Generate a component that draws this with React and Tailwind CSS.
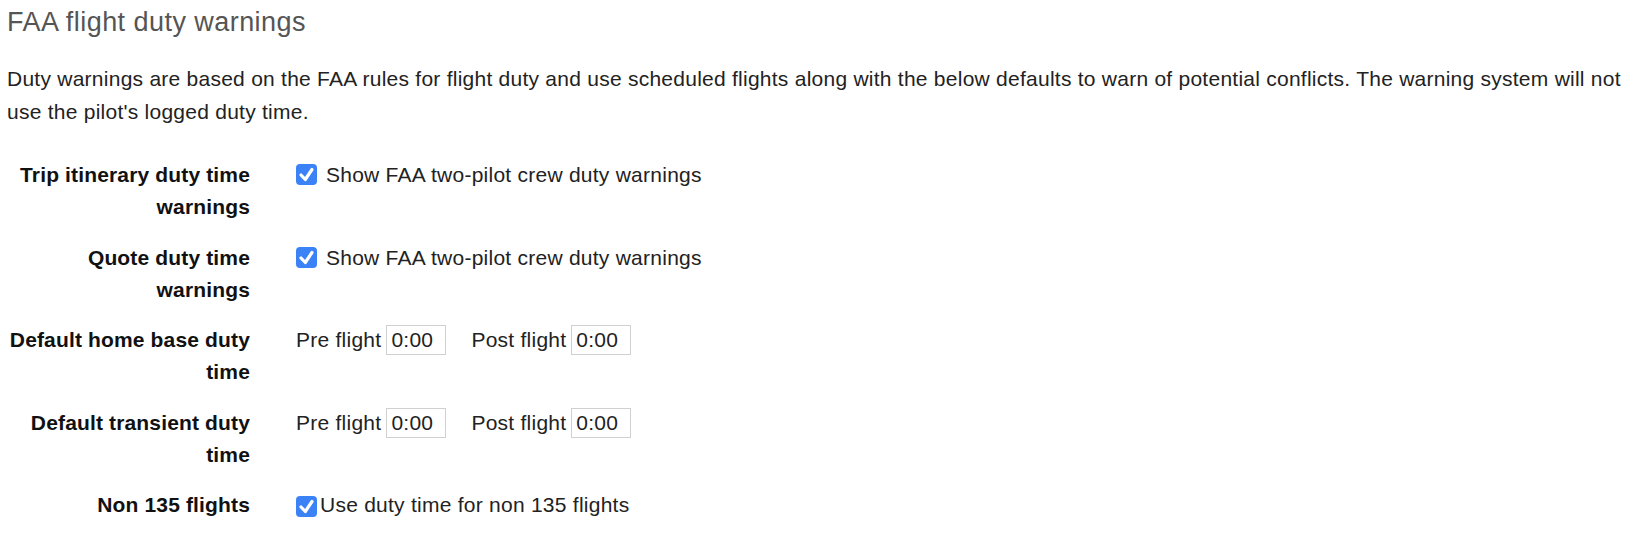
const Check = ({ drop = 3 }) => (
  <span
    className="inline-flex h-[21px] w-[21px] items-center justify-center rounded-[4px] bg-[#3b82f6]"
    style={{ verticalAlign: `-${drop}px` }}
  >
    <svg width="21" height="21" viewBox="0 0 21 21">
      <polyline
        points="5,11 9.3,15.5 16,5.5"
        fill="none"
        stroke="white"
        strokeWidth="3.2"
        strokeLinecap="round"
        strokeLinejoin="round"
      />
    </svg>
  </span>
);

const TimeInput = () => (
  <input
    type="text"
    defaultValue="0:00"
    className="inline-block h-[30px] w-[60px] border border-[#d0d0d0] bg-white px-[4px] text-[21px] tracking-[0.25px] text-[#222] outline-none"
  />
);

const Row = ({ label, children }) => (
  <div className="mb-[18.5px] flex">
    <div className="w-[243px] shrink-0 text-right font-bold tracking-[0.15px] text-[#111]">
      {label}
    </div>
    <div className="ml-[46px] tracking-[0.25px]">{children}</div>
  </div>
);

const PrePost = () => (
  <div className="flex items-baseline">
    <span>Pre flight</span>
    <span className="ml-[5px]">
      <TimeInput />
    </span>
    <span className="ml-[25px]">Post flight</span>
    <span className="ml-[5px]">
      <TimeInput />
    </span>
  </div>
);

export default function App() {
  return (
    <div className="h-[552px] w-[1640px] bg-white px-[7px] pt-[7px] font-['Liberation_Sans',Arial,sans-serif] text-[#222]">
      <h3 className="text-[27px] font-normal leading-[30px] tracking-[0.45px] text-[#555]">
        FAA flight duty warnings
      </h3>
      <p className="mt-[25px] text-[21px] leading-[33px] tracking-[0.25px]">
        Duty warnings are based on the FAA rules for flight duty and use
        scheduled flights along with the below defaults to warn of potential
        conflicts. The warning system will not use the pilot's logged duty
        time.
      </p>

      <div className="mt-[31px] text-[21px] leading-[32px]">
        <Row label="Trip itinerary duty time warnings">
          <label>
            <Check />
            <span className="ml-[9px]">Show FAA two-pilot crew duty warnings</span>
          </label>
        </Row>
        <Row label="Quote duty time warnings">
          <label>
            <Check />
            <span className="ml-[9px]">Show FAA two-pilot crew duty warnings</span>
          </label>
        </Row>
        <Row label="Default home base duty time">
          <PrePost />
        </Row>
        <Row label="Default transient duty time">
          <PrePost />
        </Row>
        <Row label="Non 135 flights">
          <label>
            <Check drop={5} />
            <span className="ml-[3px]">Use duty time for non 135 flights</span>
          </label>
        </Row>
      </div>
    </div>
  );
}
